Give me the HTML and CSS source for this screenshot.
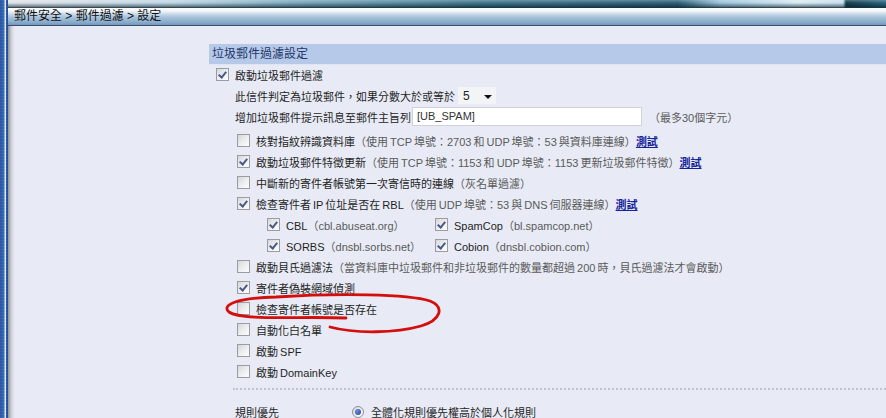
FILE: index.html
```html
<!DOCTYPE html>
<html lang="zh-Hant">
<head>
<meta charset="utf-8">
<title>垃圾郵件過濾設定</title>
<link rel="stylesheet" href="styles.css">
</head>
<body>
<div class="sidebar"></div>
<div class="main">
  <div class="topstrip"></div>
  <div class="crumb">郵件安全 &gt; 郵件過濾 &gt; 設定</div>
  <div class="content">
    <div class="panel">
      <div class="sec-title">垃圾郵件過濾設定</div>
      <div class="row"><span class="cb on"></span><span>啟動垃圾郵件過濾</span></div>
      <div class="row l1"><span>此信件判定為垃圾郵件，如果分數大於或等於</span><span class="select">5<i class="arrow"></i></span></div>
      <div class="row l1"><span>增加垃圾郵件提示訊息至郵件主旨列</span><span class="input">[UB_SPAM]</span><span class="g note">（最多30個字元）</span></div>

      <div class="row l2 first"><span class="cb"></span><span>核對指紋辨識資料庫<span class="g">（使用 TCP 埠號：2703 和 UDP 埠號：53 與資料庫連線）</span><a class="test" href="#">測試</a></span></div>
      <div class="row l2"><span class="cb on"></span><span>啟動垃圾郵件特徵更新<span class="g">（使用 TCP 埠號：1153 和 UDP 埠號：1153 更新垃圾郵件特徵）</span><a class="test" href="#">測試</a></span></div>
      <div class="row l2"><span class="cb"></span><span>中斷新的寄件者帳號第一次寄信時的連線<span class="g">（灰名單過濾）</span></span></div>
      <div class="row l2"><span class="cb on"></span><span>檢查寄件者 IP 位址是否在 RBL<span class="g">（使用 UDP 埠號：53 與 DNS 伺服器連線）</span><a class="test" href="#">測試</a></span></div>
      <div class="row l3">
        <div class="col"><span class="cb on"></span><span>CBL<span class="g">（cbl.abuseat.org）</span></span></div>
        <div class="col"><span class="cb on"></span><span>SpamCop<span class="g">（bl.spamcop.net）</span></span></div>
      </div>
      <div class="row l3">
        <div class="col"><span class="cb on"></span><span>SORBS<span class="g">（dnsbl.sorbs.net）</span></span></div>
        <div class="col"><span class="cb on"></span><span>Cobion<span class="g">（dnsbl.cobion.com）</span></span></div>
      </div>
      <div class="row l2"><span class="cb"></span><span>啟動貝氏過濾法<span class="g">（當資料庫中垃圾郵件和非垃圾郵件的數量都超過 200 時，貝氏過濾法才會啟動）</span></span></div>
      <div class="row l2"><span class="cb on"></span><span>寄件者偽裝網域偵測</span></div>
      <div class="row l2"><span class="cb"></span><span>檢查寄件者帳號是否存在</span></div>
      <div class="row l2"><span class="cb"></span><span>自動化白名單</span></div>
      <div class="row l2"><span class="cb"></span><span>啟動 SPF</span></div>
      <div class="row l2"><span class="cb"></span><span>啟動 DomainKey</span></div>

      <div class="divider"></div>

      <div class="row l1 rule"><span class="rule-label">規則優先</span><span class="radio on"></span><span>全體化規則優先權高於個人化規則</span></div>
    </div>
  </div>
</div>
<svg class="mark" width="886" height="418" viewBox="0 0 886 418" aria-hidden="true">
  <path d="M346 318 C 300 316, 242 321, 229 312 C 221 305, 236 298, 276 297 C 338 293, 408 294, 430 301 C 445 307, 441 320, 421 326 C 396 333, 356 334, 330 327" fill="none" stroke="#d40d0d" stroke-width="2.8" stroke-linecap="round"/>
</svg>
</body>
</html>
```

FILE: styles.css
```css
html, body {
  margin: 0;
  padding: 0;
}
body {
  width: 886px;
  height: 418px;
  overflow: hidden;
  display: flex;
  background: #e8ebf5;
  font-family: "Liberation Sans", "Noto Sans CJK TC", sans-serif;
  font-size: 11px;
  color: #1f1f1f;
  position: relative;
}
.sidebar {
  width: 8px;
  flex: none;
  background:
    repeating-linear-gradient(to bottom, rgba(255,255,255,0.06) 0 1px, rgba(0,0,0,0) 1px 3px),
    linear-gradient(to right, #2454a2 0, #3768b8 4px, #dfe7f4 5px, #dfe7f4 6px, #2a5aa8 6px, #1d4892 8px);
}
.main {
  flex: 1;
  display: flex;
  flex-direction: column;
  min-width: 0;
}
.topstrip {
  height: 8px;
  flex: none;
  background:
    linear-gradient(to bottom, rgba(255,255,255,0.25) 0, rgba(255,255,255,0) 35%, rgba(0,20,30,0.45) 80%, #17303d 100%),
    linear-gradient(to right, #dfe3e8 0, #bcd5e3 170px, #7aa8bc 290px, #43788d 470px, #2f6179 670px, #9cc4da 712px, #d9eaf4 790px, #c6dfee 835px, #16414f 838px, #2d6883 878px);
}
.crumb {
  height: 17px;
  line-height: 17px;
  flex: none;
  padding-left: 6px;
  font-size: 12px;
  color: #111;
  white-space: nowrap;
  background: linear-gradient(to bottom, #fbfcfd 0, #f3f6fa 3px, #d6e3ee 5px, #a9c4db 9px, #84a7c7 15px, #7098bc 17px);
  border-bottom: 1px solid #3c4c72;
}
.content {
  flex: 1;
  background: linear-gradient(to right, #8e9198 0, #b5b8c0 2px, #d6d9e3 4px, #e8ebf5 7px);
  background-color: #e8ebf5;
  position: relative;
}
.panel {
  margin: 18px 0 0 201px;
}
.sec-title {
  height: 20px;
  line-height: 20px;
  padding-left: 3px;
  font-size: 12px;
  color: #22386a;
  background: #b7c9e8;
  border-bottom: 1px solid #dfe6f3;
  margin-bottom: -1px;
}
.row {
  height: 21px;
  display: flex;
  align-items: center;
  padding-left: 7px;
  white-space: nowrap;
  word-spacing: -1px;
}
.row.l1 {
  padding-left: 26px;
}
.row.l2 {
  padding-left: 28px;
}
.row.l2.first {
  margin-top: 3px;
}
.row.l3 {
  padding-left: 58px;
}
.col {
  display: flex;
  align-items: center;
  width: 168px;
}
.g {
  color: #5a5a5a;
}
.test {
  color: #16229a;
  font-weight: bold;
  text-decoration: underline;
}
.cb {
  position: relative;
  flex: none;
  width: 11px;
  height: 11px;
  margin-right: 6px;
  border: 1px solid #9a9ca2;
  background: linear-gradient(135deg, #d6d7db 0, #eeeff1 55%, #fdfdfd 100%);
}
.cb.on::after {
  content: "";
  position: absolute;
  left: 3px;
  top: 1px;
  width: 3px;
  height: 6px;
  border-right: 2px solid #4a5a86;
  border-bottom: 2px solid #4a5a86;
  transform: rotate(40deg);
}
.select {
  display: inline-flex;
  align-items: center;
  justify-content: space-between;
  box-sizing: border-box;
  width: 38px;
  height: 17px;
  margin-left: 3px;
  padding: 0 4px 0 5px;
  background: #f3f4f6;
  font-size: 12px;
  color: #222;
}
.arrow {
  width: 0;
  height: 0;
  border-left: 4px solid transparent;
  border-right: 4px solid transparent;
  border-top: 4px solid #111;
  margin-top: 2px;
}
.input {
  box-sizing: border-box;
  width: 230px;
  height: 19px;
  line-height: 17px;
  margin-left: 1px;
  padding-left: 4px;
  background: #fff;
  border: 1px solid #cfd2d8;
  color: #333;
}
.note {
  margin-left: 7px;
}
.divider {
  margin: 6px 0 0 24px;
  border-top: 2px dotted #c2c5cd;
}
.row.rule {
  margin-top: 11px;
}
.rule-label {
  width: 117px;
  flex: none;
}
.radio {
  position: relative;
  flex: none;
  box-sizing: border-box;
  width: 12px;
  height: 12px;
  margin-right: 7px;
  border-radius: 50%;
  border: 1px solid #8c9098;
  background: linear-gradient(135deg, #d8d9dd, #ffffff);
}
.radio.on::after {
  content: "";
  position: absolute;
  left: 2px;
  top: 2px;
  width: 6px;
  height: 6px;
  border-radius: 50%;
  background: radial-gradient(circle at 35% 35%, #6f8fd6, #1f3f96);
}
.mark {
  position: absolute;
  left: 0;
  top: 0;
  pointer-events: none;
}
```
